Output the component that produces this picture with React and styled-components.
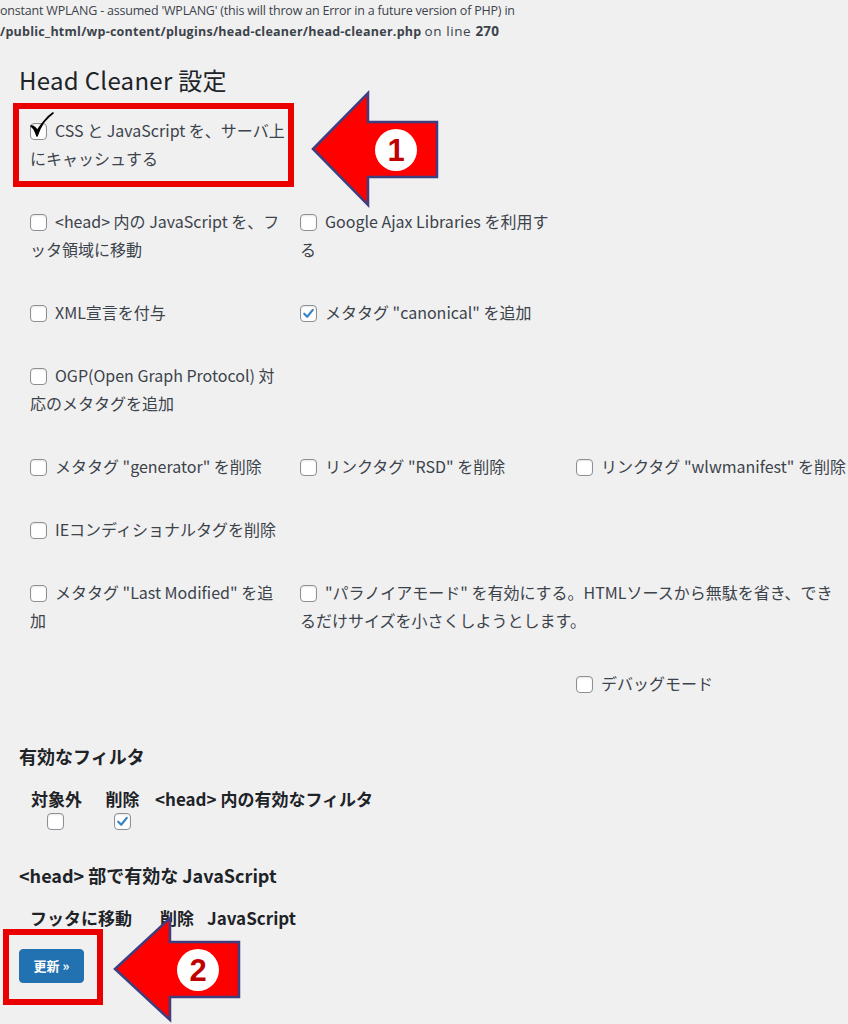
import React from 'react'
import styled, { createGlobalStyle } from 'styled-components'

const GlobalStyle = createGlobalStyle`
  html, body {
    margin: 0;
    padding: 0;
    background: #f0f0f1;
  }
  body {
    font-family: "Noto Sans CJK JP", "Noto Sans", sans-serif;
    color: #3c434a;
  }
`

const Page = styled.div`
  position: relative;
  width: 848px;
  height: 1024px;
  overflow: hidden;
  background: #f0f0f1;
`

const Warning = styled.div`
  font-family: "Open Sans", "Noto Sans CJK JP", sans-serif;
  font-size: 12.5px;
  line-height: 21px;
  color: #3c434a;
  white-space: nowrap;
  letter-spacing: -0.2px;
  b {
    font-weight: 700;
    letter-spacing: 0.25px;
  }
`

const LineNo = styled.span`
  font-size: 13.5px;
  letter-spacing: 0.6px;
`

const Title = styled.h1`
  margin: 23px 0 0 19px;
  font-size: 24px;
  line-height: 30px;
  font-weight: 400;
  letter-spacing: 0.3px;
  color: #1d2327;
`

const OptionsGrid = styled.div`
  display: grid;
  grid-template-columns: 270px 276px 1fr;
  row-gap: 35px;
  margin: 21px 0 0 30px;
`

const Option = styled.label`
  grid-column: ${(p) => (p.col ? `${p.col} / span ${p.span || 1}` : `auto / span ${p.span || 1}`)};
  font-size: 16px;
  line-height: 28px;
  white-space: nowrap;
  color: #3c434a;
`

const Box = styled.span`
  position: relative;
  display: inline-block;
  width: 17px;
  height: 17px;
  margin: 0 8px 0 0;
  border: 1px solid #8c8f94;
  border-radius: 4px;
  background: #fff;
  vertical-align: -3px;
  box-sizing: border-box;
  box-shadow: inset 0 1px 2px rgba(0, 0, 0, 0.1);
`

const Tick = styled.svg`
  position: absolute;
  left: 0;
  top: 0;
  width: 15px;
  height: 15px;
`

const BigTick = styled.svg`
  position: absolute;
  left: -2px;
  top: -14px;
  width: 26px;
  height: 30px;
`

const Checkbox = ({ checked, big }) => (
  <Box>
    {checked && (
      <Tick viewBox="0 0 14 14">
        <path d="M3 7.2 L5.8 10 L11 3.6" fill="none" stroke="#3582c4" strokeWidth="2" strokeLinecap="round" strokeLinejoin="round" />
      </Tick>
    )}
    {big && (
      <BigTick viewBox="0 0 26 28">
        <path d="M2 15 C4 16 6 19 8 25 C11 16 16 7 24 2 C16 8 12 14 8 20 C7 17 5 15 2 15 Z" fill="#000" stroke="#000" strokeWidth="1.6" strokeLinejoin="round" />
      </BigTick>
    )}
  </Box>
)

const SectionTitle = styled.h2`
  margin: ${(p) => p.top}px 0 0 19px;
  font-size: 18px;
  line-height: 24px;
  font-weight: 700;
  color: #1d2327;
`

const HeadRow = styled.div`
  display: grid;
  grid-template-columns: ${(p) => p.cols};
  margin: ${(p) => p.top}px 0 0 30px;
  font-size: 17px;
  line-height: 22px;
  font-weight: 700;
  color: #1d2327;
  white-space: nowrap;
`

const Cell = styled.div`
  text-align: ${(p) => (p.center ? 'center' : 'left')};
`

const BoxRow = styled.div`
  display: grid;
  grid-template-columns: 51px 22px 38px;
  margin: 3px 0 0 30px;
  height: 17px;
  ${Box} {
    margin: 0;
  }
`

const BoxCell = styled.div`
  grid-column: ${(p) => p.col};
  display: flex;
  justify-content: center;
`

const Button = styled.button`
  display: block;
  margin: 20px 0 0 19px;
  width: 65px;
  height: 34px;
  padding: 0;
  border: 1px solid #2271b1;
  border-radius: 4px;
  background: #2271b1;
  color: #fff;
  font-family: "Noto Sans CJK JP", sans-serif;
  font-size: 13px;
  font-weight: 700;
  line-height: 32px;
`

const Highlight = styled.div`
  position: absolute;
  left: ${(p) => p.x}px;
  top: ${(p) => p.y}px;
  width: ${(p) => p.w}px;
  height: ${(p) => p.h}px;
  border: 6px solid #ea0000;
  box-sizing: border-box;
`

const ArrowSvg = styled.svg`
  position: absolute;
  left: ${(p) => p.x}px;
  top: ${(p) => p.y}px;
  overflow: visible;
`

const Arrow = ({ x, y, w, h, label }) => {
  // tip at left middle, head ends at 55px, shaft 55px tall
  const mid = h / 2
  const headX = 55
  const shaftTop = mid - 27
  const shaftBot = mid + 28
  const pts = `0,${mid} ${headX},0 ${headX},${shaftTop} ${w},${shaftTop} ${w},${shaftBot} ${headX},${shaftBot} ${headX},${h}`
  return (
    <ArrowSvg x={x} y={y} width={w} height={h} viewBox={`0 0 ${w} ${h}`}>
      <polygon points={pts} fill="#f00" stroke="#3f3f7f" strokeWidth="2.5" strokeLinejoin="miter" />
      <circle cx={83} cy={mid + 1} r={21} fill="#fff" />
      <text
        x={83}
        y={mid + 12}
        textAnchor="middle"
        fontFamily="Liberation Sans, sans-serif"
        fontWeight="700"
        fontSize="31"
        fill="#c00000"
      >
        {label}
      </text>
    </ArrowSvg>
  )
}

export default function App() {
  return (
    <Page>
      <GlobalStyle />
      <Warning>
        onstant WPLANG - assumed 'WPLANG' (this will throw an Error in a future version of PHP) in
        <br />
        <b>/public_html/wp-content/plugins/head-cleaner/head-cleaner.php</b> <LineNo>on line <b>270</b></LineNo>
      </Warning>

      <Title>Head Cleaner 設定</Title>

      <OptionsGrid>
        <Option col={1}>
          <Checkbox big />CSS と JavaScript を、サーバ上
          <br />
          にキャッシュする
        </Option>

        <Option col={1}>
          <Checkbox />&lt;head&gt; 内の JavaScript を、フ
          <br />
          ッタ領域に移動
        </Option>
        <Option>
          <Checkbox />Google Ajax Libraries を利用す
          <br />る
        </Option>

        <Option col={1}>
          <Checkbox />XML宣言を付与
        </Option>
        <Option>
          <Checkbox checked />メタタグ "canonical" を追加
        </Option>

        <Option col={1}>
          <Checkbox />OGP(Open Graph Protocol) 対
          <br />
          応のメタタグを追加
        </Option>

        <Option col={1}>
          <Checkbox />メタタグ "generator" を削除
        </Option>
        <Option>
          <Checkbox />リンクタグ "RSD" を削除
        </Option>
        <Option>
          <Checkbox />リンクタグ "wlwmanifest" を削除
        </Option>

        <Option col={1}>
          <Checkbox />IEコンディショナルタグを削除
        </Option>

        <Option col={1}>
          <Checkbox />メタタグ "Last Modified" を追
          <br />加
        </Option>
        <Option span={2}>
          <Checkbox />"パラノイアモード" を有効にする。HTMLソースから無駄を省き、でき
          <br />
          るだけサイズを小さくしようとします。
        </Option>

        <Option col={3}>
          <Checkbox />デバッグモード
        </Option>
      </OptionsGrid>

      <SectionTitle top={47}>有効なフィルタ</SectionTitle>
      <HeadRow top={20} cols="53px 22px 35px 15px auto">
        <Cell center>対象外</Cell>
        <Cell />
        <Cell center>削除</Cell>
        <Cell />
        <Cell>&lt;head&gt; 内の有効なフィルタ</Cell>
      </HeadRow>
      <BoxRow>
        <BoxCell col={1}>
          <Checkbox />
        </BoxCell>
        <BoxCell col={3}>
          <Checkbox checked />
        </BoxCell>
      </BoxRow>

      <SectionTitle top={33}>&lt;head&gt; 部で有効な JavaScript</SectionTitle>
      <HeadRow top={20} cols="130px 47px auto">
        <Cell>フッタに移動</Cell>
        <Cell>削除</Cell>
        <Cell>JavaScript</Cell>
      </HeadRow>

      <Button>更新 »</Button>

      <Highlight x={13} y={103} w={281} h={84} />
      <Highlight x={3} y={929} w={100} h={76} />
      <Arrow x={313} y={93} w={124} h={112} label="1" />
      <Arrow x={115} y={918} w={124} h={102} label="2" />
    </Page>
  )
}
